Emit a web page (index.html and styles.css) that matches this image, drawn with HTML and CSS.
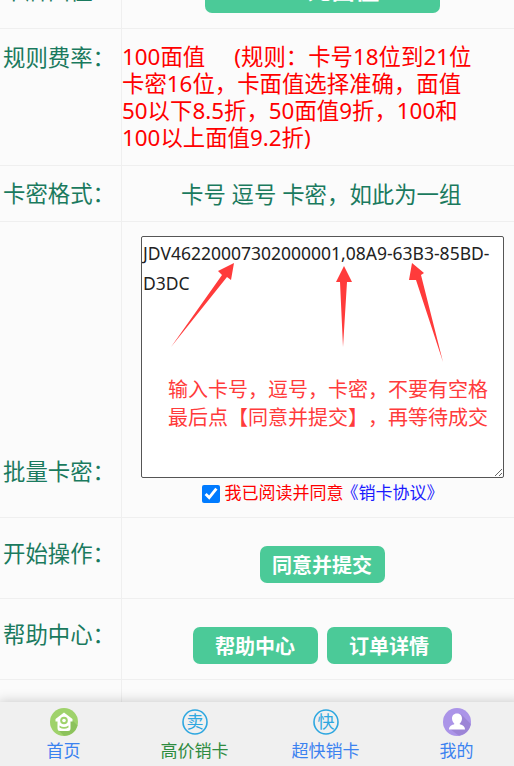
FILE: index.html
```html
<!DOCTYPE html>
<html lang="zh">
<head>
<meta charset="utf-8">
<title>批量卡密</title>
<link rel="stylesheet" href="styles.css">
</head>
<body>
<div class="page">
  <div class="rows">
    <div class="row row-value">
      <div class="label">卡牌面值：</div>
      <div class="cell cell-center"><button class="btn btn-wide" type="button">100元面值</button></div>
    </div>
    <div class="row row-rule">
      <div class="label">规则费率：</div>
      <div class="cell rule">100面值 &nbsp; &nbsp; (规则：卡号18位到21位<br>卡密16位，卡面值选择准确，面值<br>50以下8.5折，50面值9折，100和<br>100以上面值9.2折)</div>
    </div>
    <div class="row row-format">
      <div class="label">卡密格式：</div>
      <div class="cell format">卡号 逗号 卡密，如此为一组</div>
    </div>
    <div class="row row-batch">
      <div class="label label-bottom">批量卡密：</div>
      <div class="cell batch">
        <div class="area-wrap">
          <textarea class="area">JDV46220007302000001,08A9-63B3-85BD-D3DC</textarea>
          <div class="hint">
            <svg class="arrows" width="362" height="240" viewBox="0 0 362 240">
              <path d="M30 111 L81 39 L77 35 L93 27 L90 44 L86 41 Z" fill="#ff3b3b"/>
              <path d="M202 111 L199 46 L195 46 L203 30 L211 46 L206 46 Z" fill="#ff3b3b"/>
              <path d="M302 126 L275 44 L268 44 L271 27 L283 37 L280 39 Z" fill="#ff3b3b"/>
            </svg>
            <div class="hint-text">输入卡号，逗号，卡密，不要有空格<br>最后点【同意并提交】，再等待成交</div>
          </div>
        </div>
        <label class="agree">
          <input class="check" type="checkbox" checked>
          <span class="agree-red">我已阅读并同意</span><a class="agree-link">《销卡协议》</a>
        </label>
      </div>
    </div>
    <div class="row row-action">
      <div class="label">开始操作：</div>
      <div class="cell cell-btns"><button class="btn" type="button">同意并提交</button></div>
    </div>
    <div class="row row-action">
      <div class="label">帮助中心：</div>
      <div class="cell cell-btns"><button class="btn" type="button">帮助中心</button><button class="btn" type="button">订单详情</button></div>
    </div>
    <div class="row row-last">
      <div class="label"></div>
      <div class="cell"></div>
    </div>
  </div>
  <nav class="tabbar">
    <a class="tab">
      <svg class="tab-icon" width="28" height="28" viewBox="0 0 28 28">
        <circle cx="14" cy="14" r="14" fill="#9fd26b"/>
        <path d="M7 21 L14 27.800 A14 14 0 0 0 27.500 17.500 L21 11 Z" fill="#8cc25c"/>
        <path d="M14 4.500 L22.500 11 V13.500 H20.500 V20.500 Q20.500 23 18 23 H10 Q7.500 23 7.500 20.500 V13.500 H5.500 V11 Z" fill="#fff"/>
        <circle cx="14" cy="12.500" r="3.800" fill="#9fd26b"/>
        <circle cx="14" cy="12.500" r="1.800" fill="#fff"/>
        <path d="M9.500 17.500 Q14 20.500 18.500 17.500 V19.500 Q14 22 9.500 19.500 Z" fill="#9fd26b"/>
      </svg>
      <span class="tab-text">首页</span>
    </a>
    <a class="tab tab-active">
      <svg class="tab-icon" width="28" height="28" viewBox="0 0 28 28">
        <circle cx="14" cy="14" r="12" fill="none" stroke="#2ea7e0" stroke-width="1.600"/>
        <text class="glyph" x="14" y="20" text-anchor="middle">卖</text>
      </svg>
      <span class="tab-text">高价销卡</span>
    </a>
    <a class="tab">
      <svg class="tab-icon" width="28" height="28" viewBox="0 0 28 28">
        <circle cx="14" cy="14" r="12" fill="none" stroke="#2ea7e0" stroke-width="1.600"/>
        <text class="glyph" x="14" y="20" text-anchor="middle">快</text>
      </svg>
      <span class="tab-text">超快销卡</span>
    </a>
    <a class="tab">
      <svg class="tab-icon" width="28" height="28" viewBox="0 0 28 28">
        <circle cx="14" cy="14" r="14" fill="#ab94e8"/>
        <path d="M18 6 L27.800 16 A14 14 0 0 1 16 27.800 L7 21 Z" fill="#9c84d6"/>
        <path d="M14 5.500 C17.500 5.500 19 8 19 10.500 C19 13 17.500 15 16.500 16 C19 17 22 18 22 21.500 H6 C6 18 9 17 11.500 16 C10.500 15 9 13 9 10.500 C9 8 10.500 5.500 14 5.500 Z" fill="#fff"/>
      </svg>
      <span class="tab-text">我的</span>
    </a>
  </nav>
</div>
</body>
</html>
```

FILE: styles.css
```css
* { box-sizing: border-box; }
html, body { margin: 0; padding: 0; height: 100%; overflow: hidden; }
body {
  background: #fbfbfb;
  font-family: "Noto Sans", "Noto Sans CJK SC", sans-serif;
  color: #222;
  text-spacing-trim: space-all;
  font-kerning: none;
}
.page {
  width: 514px;
  height: 766px;
  display: flex;
  flex-direction: column;
  overflow: hidden;
}
.rows {
  flex: 1;
  min-height: 0;
  overflow: hidden;
}
.row {
  display: grid;
  grid-template-columns: 122px 1fr;
  border-bottom: 1px solid #efefef;
}
.row-value { height: 29px; position: relative; }
.row-rule { height: 137px; }
.row-format { height: 56px; }
.row-batch { height: 296px; }
.row-action { height: 81px; }
.row-last { height: 30px; }
.label {
  border-right: 1px solid #efefef;
  padding: 14px 0 0 3px;
  font-size: 22.4px;
  line-height: 29px;
  color: #1a7a5e;
  white-space: nowrap;
}
.row-value .label { padding-top: 0; margin-top: -24px; border-right: 0; }
.row-value::before {
  content: "";
  position: absolute;
  left: 121px;
  top: 0;
  bottom: 0;
  width: 1px;
  background: #efefef;
}
.row-format .label { padding-top: 13px; }
.label-bottom { display: flex; align-items: flex-end; padding: 0 0 31px 3px; }
.row-action .label { padding-top: 21px; }
.cell { min-width: 0; }
.cell-center { display: flex; justify-content: center; padding-left: 8px; height: 13px; align-items: flex-end; }
.rule {
  color: #f00;
  font-size: 22.4px;
  line-height: 27px;
  padding: 14px 0 0;
  white-space: nowrap;
}
.format {
  color: #1a7a5e;
  font-size: 22.4px;
  line-height: 29px;
  padding: 14px 0 0 59px;
  white-space: nowrap;
}
.batch {
  display: flex;
  flex-direction: column;
  align-items: center;
  padding: 14px 10px 0 19px;
}
.area-wrap {
  position: relative;
  width: 363px;
  height: 242px;
}
.area {
  display: block;
  width: 363px;
  height: 242px;
  margin: 0;
  padding: 1px;
  border: 1px solid #555;
  border-radius: 2px;
  background: #fff;
  font-family: "Noto Sans", "Noto Sans CJK SC", sans-serif;
  font-size: 17.5px;
  line-height: 30px;
  color: #222;
  resize: vertical;
}
.hint {
  position: absolute;
  inset: 0;
  pointer-events: none;
}
.arrows { display: block; }
.hint-text {
  position: absolute;
  left: 27px;
  top: 140px;
  font-size: 20px;
  line-height: 28px;
  color: #ff3b3b;
  white-space: nowrap;
}
.agree {
  display: flex;
  align-items: center;
  gap: 5px;
  margin: 4px 0 0;
  font-size: 17px;
  line-height: 22px;
}
.check {
  width: 18px;
  height: 18px;
  margin: 2px 0 0;
  accent-color: #007bff;
}
.agree-red { color: #f00; }
.agree-link { color: #1a1aff; margin-left: -7px; }
.btn {
  display: block;
  flex: none;
  width: 125px;
  height: 37px;
  padding: 0;
  border: 0;
  border-radius: 7px;
  background: #4bca98;
  color: #fff;
  font-family: "Noto Sans CJK SC", "Noto Sans", sans-serif;
  font-size: 20px;
  font-weight: 700;
  line-height: 37px;
}
.btn-wide { width: 235px; font-size: 24px; line-height: 25px; padding-bottom: 12px; }
.cell-btns {
  display: flex;
  justify-content: center;
  gap: 9px;
  padding: 28px 0 0 8px;
}
.tabbar {
  flex: none;
  height: 64px;
  display: grid;
  grid-template-columns: repeat(4, 131px);
  margin: 0 -8px 0 -2px;
  background: #f0f0f0;
  box-shadow: 0 0 12px rgba(0, 0, 0, 0.22);
  position: relative;
}
.tab {
  display: flex;
  flex-direction: column;
  align-items: center;
  padding-top: 6px;
  color: #3b82f0;
}
.tab-active { color: #2e8b3f; }
.tab-icon { display: block; flex: none; }
.tab-text {
  font-size: 17px;
  line-height: 24px;
  margin-top: 3px;
}
.glyph {
  font-family: "Noto Sans CJK SC", sans-serif;
  font-size: 17px;
  fill: #2ea7e0;
}
```
